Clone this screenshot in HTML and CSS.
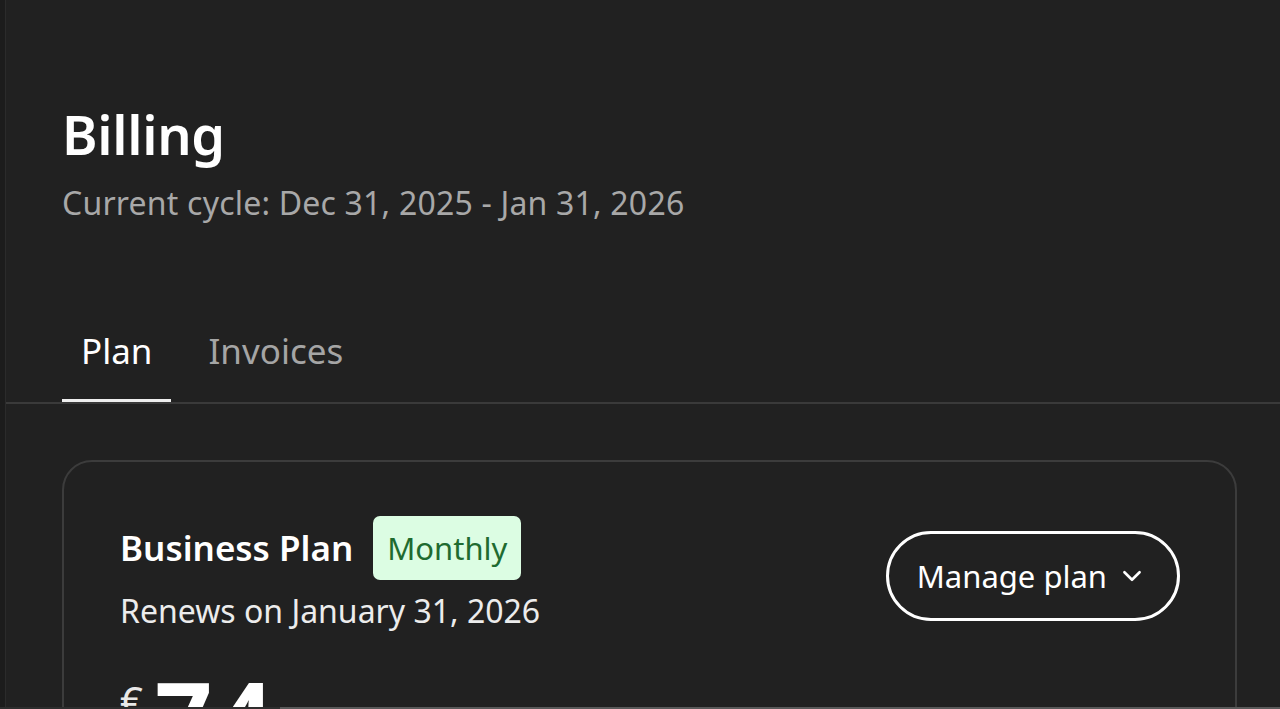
FILE: index.html
```html
<!DOCTYPE html>
<html>
<head>
<meta charset="utf-8">
<link rel="stylesheet" href="styles.css">
</head>
<body>
<div class="app">
  <div class="rail"></div>
  <main class="main">
    <header class="head">
      <h1 class="title">Billing</h1>
      <p class="cycle">Current cycle: Dec 31, 2025 - Jan 31, 2026</p>
    </header>
    <nav class="tabs">
      <div class="tab active">Plan</div>
      <div class="tab">Invoices</div>
    </nav>
    <section class="card">
      <div class="card-top">
        <div class="plan-info">
          <div class="plan-row">
            <span class="plan-name">Business Plan</span>
            <span class="badge">Monthly</span>
          </div>
          <div class="renew">Renews on January 31, 2026</div>
        </div>
        <button class="manage">Manage plan
          <svg class="chev" width="26" height="26" viewBox="0 0 24 24" fill="none" stroke="#fff" stroke-width="2.4" stroke-linecap="round" stroke-linejoin="round"><path d="M5 8.5l7 7 7-7"/></svg>
        </button>
      </div>
      <div class="price"><span class="cur">€</span><span class="amt">74</span></div>
    </section>
  </main>
</div>
<div class="bottom-edge"><span class="seg-a"></span><span class="seg-b"></span></div>
</body>
</html>
```
FILE: styles.css
```css
* { box-sizing: border-box; }
html, body { margin: 0; height: 100%; }
body {
  background: #212121;
  color: #fff;
  font-family: "Noto Sans", "Open Sans", sans-serif;
  overflow: hidden;
}
.app { display: flex; height: 709px; overflow: hidden; }
.rail {
  width: 6px;
  flex: none;
  background: #1c1c1c;
  border-right: 1px solid #2b2b2b;
}
.main { flex: 1; min-width: 0; }
.head { padding: 96px 0 0 56px; }
.title {
  margin: 0;
  font-size: 54px;
  font-weight: 600;
  line-height: 76px;
  letter-spacing: -0.3px;
}
.cycle {
  margin: 11px 0 0;
  font-size: 32px;
  line-height: 40px;
  color: #a8a8a8;
  letter-spacing: 0.2px;
}
.tabs {
  display: flex;
  margin-top: 102px;
  padding-left: 56px;
  border-bottom: 2px solid #3a3a3a;
}
.tab {
  font-size: 35px;
  line-height: 44px;
  padding: 4px 19px 29px;
  color: #a5a5a5;
}
.tab + .tab { margin-left: 18px; }
.tab.active {
  color: #fff;
  box-shadow: inset 0 -3px 0 #eeeeee;
}
.card {
  margin: 56px 43px 0 56px;
  border: 2px solid #3c3c3c;
  border-radius: 30px;
  padding: 54px 55px 0 56px;
  height: 340px;
}
.card-top { display: flex; justify-content: space-between; align-items: center; }
.plan-row { display: flex; align-items: center; gap: 20px; }
.plan-name { font-size: 35px; font-weight: 600; line-height: 64px; }
.badge {
  background: #dcfde3;
  color: #1f6b30;
  font-size: 31px;
  line-height: 64px;
  padding: 0 14px;
  border-radius: 7px;
}
.renew { font-size: 32px; line-height: 40px; color: #ececec; margin-top: 11px; }
.manage {
  display: flex;
  align-items: center;
  gap: 12px;
  background: transparent;
  color: #fff;
  border: 3px solid #fff;
  border-radius: 46px;
  height: 90px;
  padding: 0 32px 0 28px;
  font-family: inherit;
  font-size: 31px;
  margin-top: 4px;
}
.price { margin-top: 35px; display: flex; align-items: flex-start; gap: 12px; }
.cur { font-size: 40px; line-height: 1; color: #e8e8e8; margin-top: 15px; }
.amt { font-size: 100px; font-weight: 700; line-height: 1; letter-spacing: 4px; }
.bottom-edge {
  position: fixed;
  left: 0;
  right: 0;
  bottom: 0;
  height: 2px;
  display: flex;
}
.seg-a { width: 280px; background: #2e2e2e; }
.seg-b { flex: 1; background: #5a5a5a; }
```
